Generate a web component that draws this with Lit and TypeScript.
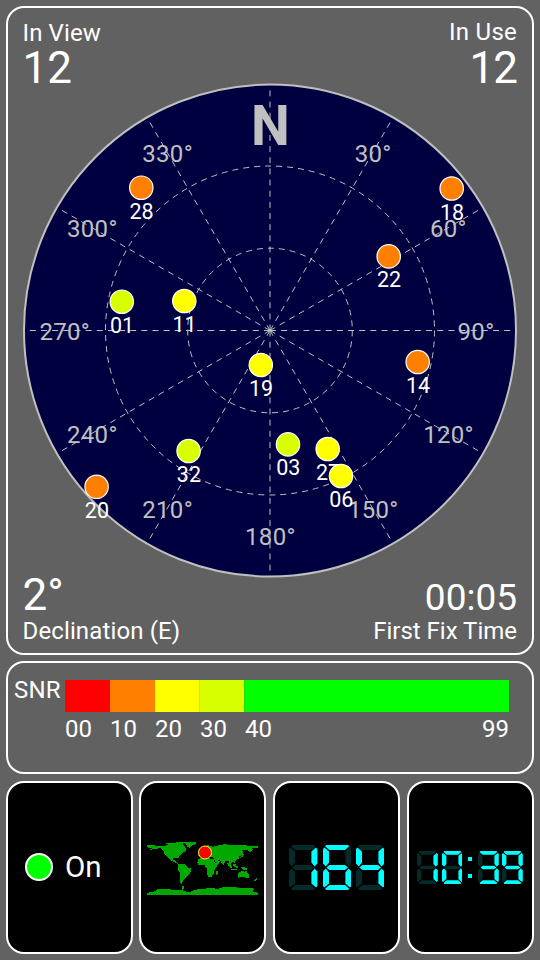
import { LitElement, html, css, svg } from "lit";
import { customElement, property } from "lit/decorators.js";

const CX = 270;
const CY = 330.5;
const R = 246;

type Sat = { id: string; x: number; y: number; color: string };
const ORANGE = "#ff8000";
const YELLOW = "#ffff00";
const LIME = "#d8ff00";

const SATS: Sat[] = [
  { id: "28", x: 141.3, y: 187.7, color: ORANGE },
  { id: "18", x: 451.7, y: 188.5, color: ORANGE },
  { id: "22", x: 388.7, y: 256.4, color: ORANGE },
  { id: "01", x: 121.8, y: 301.7, color: LIME },
  { id: "11", x: 184.3, y: 301, color: YELLOW },
  { id: "19", x: 260.8, y: 365, color: YELLOW },
  { id: "14", x: 417.7, y: 362, color: ORANGE },
  { id: "32", x: 188.6, y: 451, color: LIME },
  { id: "03", x: 288, y: 444.4, color: LIME },
  { id: "27", x: 327.7, y: 449, color: YELLOW },
  { id: "06", x: 341, y: 476, color: YELLOW },
  { id: "20", x: 96.6, y: 486.8, color: ORANGE },
];

@customElement("sky-plot")
class SkyPlot extends LitElement {
  static styles = css`
    :host { display: block; }
    svg { display: block; width: 524px; height: 645px; font-family: Roboto, sans-serif; }
    .disc { fill: #000040; stroke: #c0c0c0; stroke-width: 2; }
    .grid { fill: none; stroke: #c0c0c0; stroke-width: 1; stroke-dasharray: 6 5; }
    .spoke { stroke-dasharray: 6 5.15; }
    .deg { fill: #c0c0c0; font-size: 24px; letter-spacing: 0.3px; text-anchor: middle; }
    .north { fill: #c0c0c0; font-size: 55px; font-weight: 700; text-anchor: middle; }
    .sat { stroke: #fff; stroke-width: 1.2; }
    .id { fill: #fff; font-size: 21.5px; text-anchor: middle; }
  `;
  render() {
    const angles = Array.from({ length: 12 }, (_, i) => i * 30);
    const at = (a: number, r: number) => {
      const t = (a * Math.PI) / 180;
      return { x: CX + r * Math.sin(t), y: CY - r * Math.cos(t) };
    };
    return html`<svg viewBox="8 8 524 645">
      <circle class="disc" cx=${CX} cy=${CY} r=${R}></circle>
      ${angles
        .filter((a) => a !== 0)
        .map((a) => {
          const p = at(a, 205.6);
          return svg`<text class="deg" x=${p.x + 0.4} y=${p.y + 9.2}>${a}°</text>`;
        })}
      <text class="north" x="270.5" y="145">N</text>
      <circle class="grid" cx=${CX} cy=${CY} r="82.3"></circle>
      <circle class="grid" cx=${CX} cy=${CY} r="164.5"></circle>
      ${angles.map((a) => {
        const p = at(a, a % 90 === 0 ? R : 240.5);
        return svg`<line class="grid spoke" x1=${CX} y1=${CY} x2=${p.x} y2=${p.y}></line>`;
      })}
      ${SATS.map(
        (s) => svg`<circle class="sat" cx=${s.x} cy=${s.y} r="11.7" fill=${s.color}></circle>
          <text class="id" x=${s.x + 0.3} y=${s.y + 31}>${s.id}</text>`
      )}
    </svg>`;
  }
}

const SEGMENTS: Record<string, string> = {
  a: "M2 1.2 3.4 0H25L26.4 1.2 22 5H6.4Z",
  b: "M27 2.6 28.4 4V18.6L25.6 21.4 22.4 17.6V6.6Z",
  c: "M25.6 23.6 28.4 26.4V41L27 42.4 22.4 38.4V27.4Z",
  d: "M6.4 40H22L26.4 43.8 25 45H3.4L2 43.8Z",
  e: "M2.8 23.6 6 27.4V38.4L1.4 42.4 0 41V26.4Z",
  f: "M1.4 2.6 6 6.6V17.6L2.8 21.4 0 18.6V4Z",
  g: "M6.4 20H22L25 22.5 22 25H6.4L3.4 22.5Z",
};
const LIT: Record<string, string> = {
  "0": "abcdef", "1": "bc", "3": "abcdg", "4": "bcfg", "6": "acdefg", "9": "abcdfg",
};

@customElement("led-readout")
class LedReadout extends LitElement {
  @property() value = "";
  @property({ type: Number }) digit = 28.4;
  static styles = css`
    :host { display: flex; }
    svg { display: block; }
    .on { fill: #00ffff; }
    .off { fill: #042a2a; }
    .row { display: flex; }
    .row.large { gap: 5px; }
    .row.small { gap: 3.4px; }
    .colon { display: flex; flex-direction: column; justify-content: space-between; width: 4px; padding: 6px 2.2px 6px 2.6px; }
    .dot { width: 4px; height: 4px; background: #00ffff; }
  `;
  render() {
    return html`<div class="row ${this.digit > 25 ? "large" : "small"}" role="img" aria-label=${this.value}>
      ${[...this.value].map((c) =>
        c === ":"
          ? html`<div class="colon"><div class="dot"></div><div class="dot"></div></div>`
          : html`<svg viewBox="0 0 28.4 45" width=${this.digit} height=${(this.digit * 45) / 28.4}>
              ${Object.entries(SEGMENTS).map(
                ([k, d]) => svg`<path class=${LIT[c].includes(k) ? "on" : "off"} d=${d}></path>`
              )}
            </svg>`
      )}
    </div>`;
  }
}

const LAND = [
  "36,48 48,47 60,48 74,49 90,49 98,45 92,41 100,39 118,41 130,37 148,37 142,43 150,50 154,62 146,68 138,76 132,81 130,88 126,84 114,85 114,92 120,92 122,97 132,101 128,103 118,98 106,92 96,82 88,72 86,64 76,56 58,59 44,61 50,57 38,54",
  "146,38 160,36 184,38 180,45 172,48 164,56 158,52 154,44",
  "131,102 142,102 152,106 158,114 170,118 166,130 158,138 152,144 146,152 141,158 142,164 135,160 134,144 136,132 128,120 128,110",
  "198,84 214,82 226,88 236,90 240,100 252,102 244,112 238,122 236,134 228,143 220,144 216,132 215,116 208,107 192,108 186,100 190,90",
  "244,126 249,124 247,136 243,138",
  "190,80 192,72 200,68 196,62 204,60 208,50 220,47 234,52 250,48 268,44 284,46 300,48 330,47 348,50 369,48 369,54 352,56 354,62 344,68 338,62 322,62 326,70 318,78 312,82 312,88 302,92 300,100 294,98 288,100 290,108 284,106 280,94 272,94 266,106 260,100 256,92 246,92 256,96 246,102 238,92 234,84 228,82 220,80 214,80 206,74 198,78",
  "192,60 197,60 196,68 191,68",
  "322,70 327,74 322,82 317,86 316,82 322,78",
  "276,98 286,106 292,114 288,116 278,106",
  "294,104 302,102 302,114 296,112",
  "288,118 306,120 306,122 288,121",
  "304,108 309,110 307,117 304,115",
  "318,112 334,115 338,122 328,121 320,118",
  "310,130 318,126 324,124 330,127 334,124 338,130 344,136 342,144 336,147 328,142 318,143 309,145 309,134",
  "364,144 367,148 360,156 357,153",
  "36,190 58,186 66,180 88,178 108,180 130,182 140,180 142,170 148,170 144,184 164,188 176,182 196,178 230,176 250,178 262,174 290,173 320,175 344,174 358,178 354,186 369,190 369,195 36,195",
];

@customElement("world-map")
class WorldMap extends LitElement {
  static styles = css`
    :host { display: block; }
    svg { display: block; width: 112px; height: 54px; }
    .land { fill: #00a800; shape-rendering: crispEdges; }
    .here { fill: #ff0000; stroke: #ffff30; stroke-width: 3; }
  `;
  render() {
    return html`<svg viewBox="36 34.5 336 162">
      ${LAND.map((p) => svg`<polygon class="land" points=${p}></polygon>`)}
      <circle class="here" cx="210" cy="69" r="19.5"></circle>
    </svg>`;
  }
}

@customElement("app-root")
class AppRoot extends LitElement {
  static styles = css`
    :host {
      display: flex; flex-direction: column; box-sizing: border-box;
      width: 540px; height: 960px; padding: 6px; gap: 6px; overflow: hidden;
      background: #626262; color: #fff; font-family: Roboto, sans-serif;
    }
    .panel { box-sizing: border-box; border: 2px solid #fff; border-radius: 18px; }
    .sky { display: grid; height: 649px; background: #616161; }
    .sky > * { grid-area: 1 / 1; }
    .stats {
      display: grid; grid-template-columns: auto auto; justify-content: space-between;
      align-content: space-between; padding: 11px 15px 8px 14.5px; z-index: 1;
    }
    .stat { display: flex; flex-direction: column; }
    .right { text-align: right; align-items: flex-end; }
    .name { font-size: 24px; line-height: 28px; letter-spacing: 0.13px; }
    .right .name { letter-spacing: 0; }
    .top.right .name { margin-top: -1px; margin-bottom: 1px; letter-spacing: 0.25px; }
    .big { font-size: 44px; line-height: 42px; }
    .right .big { letter-spacing: -1px; }
    .bottom { justify-content: flex-end; }
    .bottom .big { margin-bottom: 1px; }
    .time { font-size: 37px; line-height: 39px; }
    .snr { display: flex; height: 113px; padding: 16.5px 0 0 6px; font-size: 24px; line-height: 28px; background: #616161; }
    .snr-name { width: 51px; margin-top: -4px; letter-spacing: 0.2px; }
    .scale { width: 444px; }
    .bar { display: grid; grid-template-columns: 45px 45px 45px 44px 1fr; height: 32px; }
    .ticks { display: grid; grid-template-columns: 45px 45px 45px 45px 1fr auto; margin-top: 3.5px; }
    .red { background: #ff0000; }
    .orange { background: #ff8000; }
    .yellow { background: #ffff00; box-shadow: inset -1px 0 #dde000; }
    .lime { background: #d8ff00; }
    .green { background: #00ff00; box-shadow: inset 1px 0 #20dc10; }
    .tiles { display: flex; justify-content: space-between; height: 173px; margin-top: 1px; }
    .tile { display: flex; align-items: center; width: 127px; background: #000; overflow: hidden; }
    .power { gap: 12px; padding: 0 0 1px 17px; font-size: 29.5px; }
    .lamp { box-sizing: border-box; width: 28px; height: 28px; border: 2px solid #fff; border-radius: 50%; background: #00ff00; }
    .map { padding: 1px 0 0 6px; margin: 0 0.35px 0 -0.35px; }
    .speed { padding-left: 14px; }
    .clock { padding-left: 8.5px; }
  `;
  render() {
    return html`
      <section class="panel sky">
        <sky-plot></sky-plot>
        <div class="stats">
          <div class="stat top"><span class="name">In View</span><span class="big">12</span></div>
          <div class="stat top right"><span class="name">In Use</span><span class="big">12</span></div>
          <div class="stat bottom"><span class="big">2°</span><span class="name">Declination (E)</span></div>
          <div class="stat bottom right"><span class="time">00:05</span><span class="name">First Fix Time</span></div>
        </div>
      </section>
      <section class="panel snr">
        <div class="snr-name">SNR</div>
        <div class="scale">
          <div class="bar">
            ${["red", "orange", "yellow", "lime", "green"].map((c) => html`<div class=${c}></div>`)}
          </div>
          <div class="ticks">${["00", "10", "20", "30", "40", "99"].map((t) => html`<span>${t}</span>`)}</div>
        </div>
      </section>
      <section class="tiles">
        <div class="panel tile power"><div class="lamp"></div><span>On</span></div>
        <div class="panel tile map"><world-map></world-map></div>
        <div class="panel tile speed"><led-readout value="164" digit="28.4"></led-readout></div>
        <div class="panel tile clock"><led-readout value="10:39" digit="20.8"></led-readout></div>
      </section>
    `;
  }
}
